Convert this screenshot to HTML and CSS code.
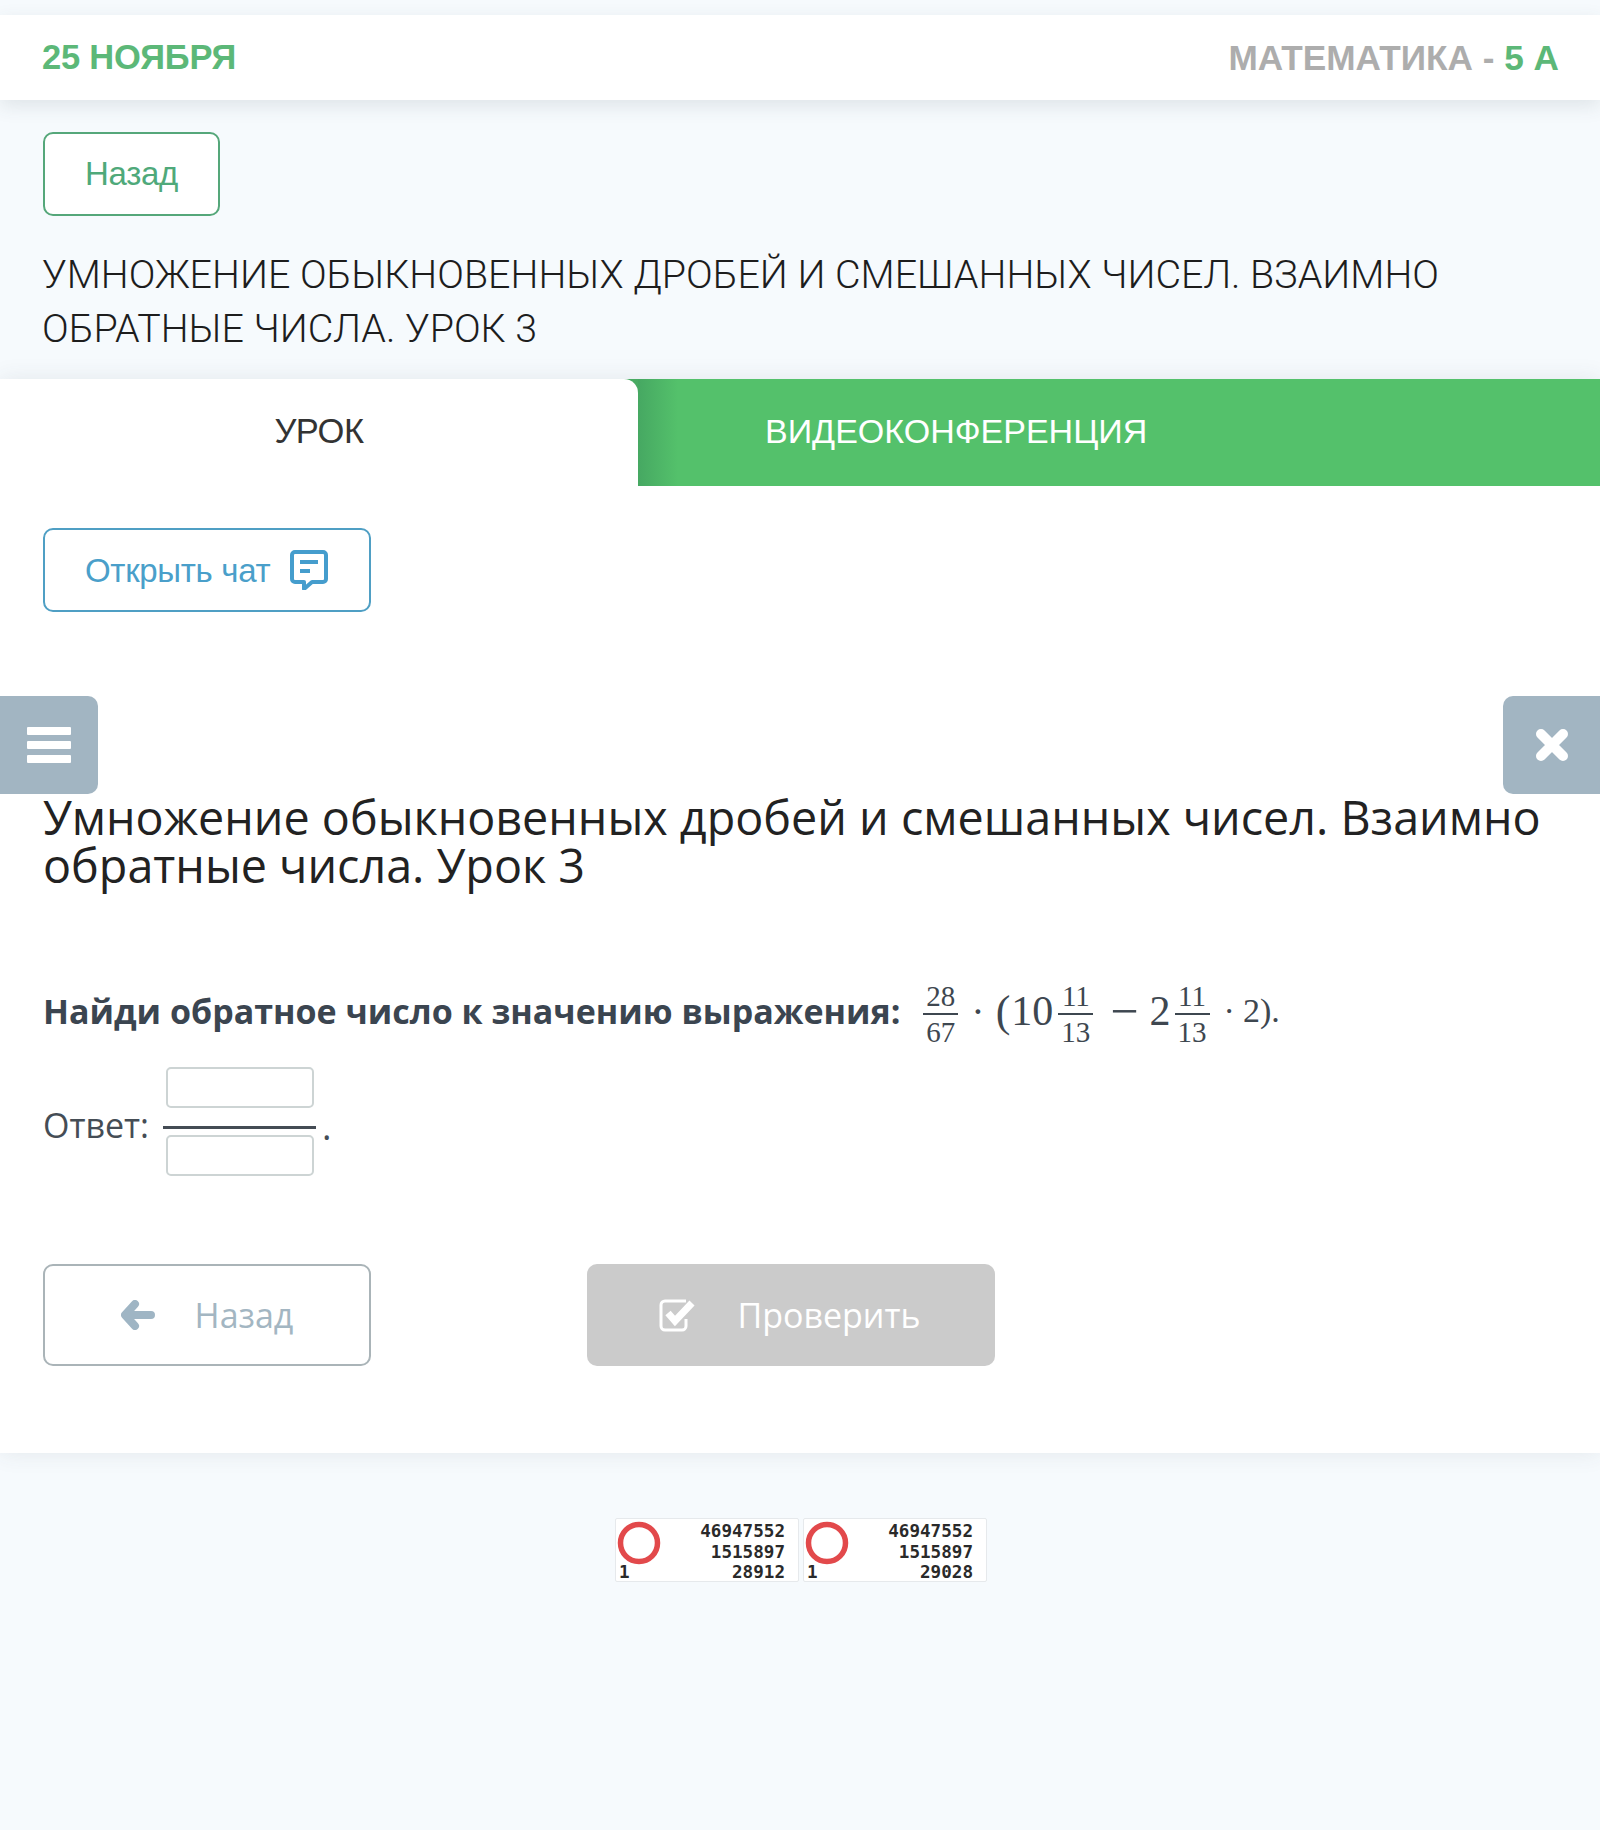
FILE: index.html
```html
<!DOCTYPE html>
<html lang="ru">
<head>
<meta charset="utf-8">
<title>Урок</title>
<link rel="stylesheet" href="styles.css">
</head>
<body>
<header class="topbar">
  <div class="date">25 НОЯБРЯ</div>
  <div class="subject">МАТЕМАТИКА - <span class="grade">5 А</span></div>
</header>
<section class="intro">
  <a class="btn-back">Назад</a>
  <h1 class="lesson-title">УМНОЖЕНИЕ ОБЫКНОВЕННЫХ ДРОБЕЙ И СМЕШАННЫХ ЧИСЕЛ. ВЗАИМНО ОБРАТНЫЕ ЧИСЛА. УРОК 3</h1>
</section>
<main class="panel">
  <nav class="tabs">
    <div class="tab tab-active">УРОК</div>
    <div class="tab tab-green">ВИДЕОКОНФЕРЕНЦИЯ</div>
  </nav>
  <div class="chat-row">
    <a class="btn-chat"><span class="chat-label">Открыть чат</span>
      <svg class="chat-icon" viewBox="0 0 38 40" width="38" height="40"><path d="M5 2h28a3 3 0 0 1 3 3v24a3 3 0 0 1-3 3H22l-8 7v-7H5a3 3 0 0 1-3-3V5a3 3 0 0 1 3-3z" fill="none" stroke="#459dcd" stroke-width="4" stroke-linejoin="round"/><path d="M10 12h18M10 21h10" stroke="#459dcd" stroke-width="4" fill="none"/></svg>
    </a>
  </div>
  <div class="side-row">
    <div class="side-btn side-left">
      <svg viewBox="0 0 44 36" width="44" height="36"><rect y="0" width="44" height="8" rx="1" fill="#fff"/><rect y="14" width="44" height="8" rx="1" fill="#fff"/><rect y="28" width="44" height="8" rx="1" fill="#fff"/></svg>
    </div>
    <div class="side-btn side-right">
      <svg viewBox="0 0 36 36" width="36" height="36"><path d="M7 7l22 22M29 7L7 29" stroke="#fff" stroke-width="10" stroke-linecap="round"/></svg>
    </div>
  </div>
  <article class="task">
    <h2 class="task-title">Умножение обыкновенных дробей и смешанных чисел. Взаимно обратные числа. Урок 3</h2>
    <div class="question">
      <b class="q-text">Найди обратное число к значению выражения:</b>
      <span class="math">
        <span class="frac f1"><span>28</span><span>67</span></span>
        <span class="op dot1">·</span>
        <span class="paren">(</span><span class="num">10</span>
        <span class="frac f2"><span>11</span><span>13</span></span>
        <span class="op minus">−</span>
        <span class="num two">2</span>
        <span class="frac f3"><span>11</span><span>13</span></span>
        <span class="op dot2">·</span>
        <span class="tail">2).</span>
      </span>
    </div>
    <div class="answer">
      <span class="a-label">Ответ:</span>
      <span class="a-frac">
        <span class="a-box a-top"></span>
        <span class="a-line"></span>
        <span class="a-box"></span>
      </span>
      <span class="a-dot">.</span>
    </div>
    <div class="actions">
      <a class="btn-nav">
        <svg viewBox="0 0 34 30" width="34" height="30"><path d="M14 4L4 15l10 11M6 15h24" fill="none" stroke="#9fb5c4" stroke-width="8" stroke-linecap="round" stroke-linejoin="round"/></svg>
        <span>Назад</span>
      </a>
      <a class="btn-check">
        <svg viewBox="0 0 38 34" width="38" height="34"><path d="M27 21v7a4 4 0 0 1-4 4H6a4 4 0 0 1-4-4V7a4 4 0 0 1 4-4h21" fill="none" stroke="#fff" stroke-width="3"/><path d="M9 15l7 8L33 5" fill="none" stroke="#fff" stroke-width="7"/></svg>
        <span>Проверить</span>
      </a>
    </div>
  </article>
</main>
<footer class="counters">
  <div class="counter">
    <svg class="ring" viewBox="0 0 44 44" width="44" height="44"><circle cx="22" cy="22" r="18.5" fill="none" stroke="#e2494b" stroke-width="5.5"/></svg>
    <div class="c-lines"><div>46947552</div><div>1515897</div><div class="c-last"><span>1</span><span>28912</span></div></div>
  </div>
  <div class="counter">
    <svg class="ring" viewBox="0 0 44 44" width="44" height="44"><circle cx="22" cy="22" r="18.5" fill="none" stroke="#e2494b" stroke-width="5.5"/></svg>
    <div class="c-lines"><div>46947552</div><div>1515897</div><div class="c-last"><span>1</span><span>29028</span></div></div>
  </div>
</footer>
</body>
</html>
```
FILE: styles.css
```css
* { box-sizing: border-box; }
html, body { margin: 0; padding: 0; }
body {
  width: 1600px;
  height: 1830px;
  overflow: hidden;
  background: #f6fafd;
  font-family: "Liberation Sans", Arial, sans-serif;
  padding-top: 15px;
}
.topbar {
  height: 85px;
  background: #fff;
  display: flex;
  justify-content: space-between;
  align-items: center;
  padding: 0 41px 0 42px;
  font-weight: 700;
  box-shadow: 0 6px 18px rgba(60, 70, 80, .12);
  position: relative;
}
.date, .grade { color: #5cb878; }
.date { font-size: 34.5px; letter-spacing: -.2px; }
.subject { color: #adadad; font-size: 35.2px; }
.intro { padding: 32px 43px 0; height: 279px; }
.btn-back {
  display: flex;
  align-items: center;
  justify-content: center;
  width: 177px;
  height: 84px;
  background: #fff;
  border: 2px solid #55a77a;
  border-radius: 10px;
  color: #4fa97a;
  font-size: 33px;
  letter-spacing: -.3px;
}
.lesson-title {
  margin: 32px 0 0 -1px;
  font-family: Roboto, "Liberation Sans", sans-serif;
  font-size: 39.4px;
  line-height: 53.5px;
  font-weight: 300;
  color: #1d1d1d;
}
.panel {
  height: 1074px;
  background: #fff;
  box-shadow: 0 0 22px rgba(60, 70, 80, .1);
  position: relative;
}
.tabs { display: flex; height: 107px; background: #49ab63; }
.tab {
  display: flex;
  align-items: center;
  font-size: 34.5px;
  letter-spacing: -.5px;
  padding-bottom: 2px;
}
.tab-active {
  width: 638px;
  justify-content: center;
  background: #fff;
  color: #333;
  border-top-right-radius: 14px;
}
.tab-green {
  width: 962px;
  color: #fff;
  padding-left: 127px;
  font-size: 34px;
  background: linear-gradient(90deg, #46a862 0, #54c16b 40px);
  letter-spacing: 0;
}
.chat-row { padding: 42px 43px 0; height: 210px; }
.btn-chat {
  display: flex;
  align-items: center;
  gap: 19px;
  width: 328px;
  height: 84px;
  padding-left: 40px;
  border: 2px solid #4f9fc4;
  border-radius: 10px;
  color: #4a9fca;
  font-size: 33px;
  letter-spacing: -.3px;
}
.chat-label { padding-top: 2px; }
.chat-icon { flex: none; margin-left: 1px; }
.side-row { display: flex; justify-content: space-between; height: 98px; margin-bottom: -1px; }
.side-btn {
  height: 98px;
  background: #a2b5c2;
  display: flex;
  align-items: center;
  justify-content: center;
  position: relative;
}
.side-left { width: 98px; border-radius: 0 10px 10px 0; }
.side-right { width: 97px; border-radius: 10px 0 0 10px; }
.task { padding: 0 43px; font-family: "Open Sans", sans-serif; }
.task-title {
  margin: 0;
  font-size: 46.7px;
  line-height: 48px;
  font-weight: 400;
  color: #222;
}
.question {
  display: flex;
  align-items: center;
  height: 100px;
  margin-top: 72px;
  color: #3b4550;
}
.q-text { font-size: 34px; font-weight: 700; white-space: nowrap; }
.math {
  display: flex;
  align-items: center;
  font-family: "Liberation Serif", serif;
  color: #3e4750;
  font-size: 42px;
  margin-left: 23px;
}
.frac {
  display: inline-flex;
  flex-direction: column;
  align-items: center;
  width: 35px;
  font-size: 29px;
  line-height: 32px;
  padding-top: 6px;
}
.frac span:first-child { border-bottom: 2px solid #3e4750; width: 100%; text-align: center; padding-bottom: 1px; }
.frac span:last-child { padding-top: 1px; }
.f1 { margin-right: 13px; }
.dot1 { margin-right: 11px; font-size: 40px; }
.paren { margin-right: 1px; font-size: 44px; }
.f2 { margin-left: 5px; }
.minus { margin: 0 11px 0 17px; font-size: 50px; }
.f3 { margin-left: 4px; }
.dot2 { margin: 0 8px 0 14px; font-size: 34px; }
.tail { font-size: 34px; }
.answer {
  display: flex;
  align-items: center;
  height: 109px;
  margin-top: 6px;
  font-size: 34px;
  color: #454d55;
}
.a-label { padding-top: 7px; }
.a-frac {
  display: flex;
  flex-direction: column;
  align-items: center;
  width: 153px;
  margin-left: 14px;
}
.a-box {
  display: block;
  width: 148px;
  height: 41px;
  background: #fff;
  border: 2px solid #cdd4d4;
  border-radius: 5px;
  margin-top: 6px;
}
.a-box.a-top { margin: 0 0 18px; }
.a-line { display: block; width: 153px; height: 3px; background: #444c54; }
.a-dot { margin-left: 6px; font-size: 36px; padding-top: 10px; }
.actions {
  display: flex;
  gap: 216px;
  margin-top: 88px;
}
.btn-nav, .btn-check {
  display: flex;
  align-items: center;
  justify-content: center;
  height: 102px;
  font-size: 34px;
  border-radius: 10px;
}
.btn-nav {
  width: 328px;
  gap: 40px;
  border: 2px solid #aab4b8;
  color: #a3b6c2;
}
.btn-check {
  width: 408px;
  gap: 40px;
  background: #cbcbcb;
  color: #fff;
  padding-right: 2px;
}
.counters {
  display: flex;
  gap: 4px;
  padding: 65px 0 0 615px;
}
.counter {
  width: 184px;
  height: 64px;
  background: #fff;
  border: 1px solid #e6e9ec;
  border-radius: 2px;
  display: flex;
  position: relative;
  padding: 2px 13px 0 3px;
  font-family: "DejaVu Sans Mono", monospace;
  font-weight: 700;
  font-size: 17.6px;
  line-height: 20.5px;
  color: #2a2a2a;
  text-align: right;
}
.ring { position: absolute; left: 1px; top: 2px; }
.c-lines { flex: 1; }
.c-last { display: flex; justify-content: space-between; }
```
